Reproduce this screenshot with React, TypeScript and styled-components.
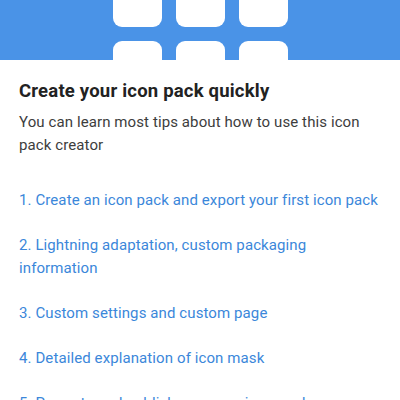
import styled, { createGlobalStyle } from 'styled-components';

const GlobalStyle = createGlobalStyle`
  html, body {
    margin: 0;
    padding: 0;
    background: #ffffff;
  }
  body {
    font-family: Roboto, "Liberation Sans", sans-serif;
  }
`;

const tips = [
  '1. Create an icon pack and export your first icon pack',
  '2. Lightning adaptation, custom packaging information',
  '3. Custom settings and custom page',
  '4. Detailed explanation of icon mask',
  '5. Promote and publish your own icon pack',
];

const App = () => (
  <Page>
    <GlobalStyle />
    <Banner>
      <TileGrid>
        {Array.from({ length: 6 }).map((_, i) => (
          <Tile key={i} />
        ))}
      </TileGrid>
    </Banner>
    <Content>
      <Title>Create your icon pack quickly</Title>
      <Intro>You can learn most tips about how to use this icon pack creator</Intro>
      <TipList>
        {tips.map((tip) => (
          <TipLink key={tip}>{tip}</TipLink>
        ))}
      </TipList>
    </Content>
  </Page>
);

export default App;

const Page = styled.div`
  width: 400px;
  height: 400px;
  overflow: hidden;
  background: #ffffff;
`;

const Banner = styled.div`
  height: 60px;
  background: #4a93e7;
  overflow: hidden;
  display: flex;
  justify-content: center;
`;

const TileGrid = styled.div`
  display: grid;
  grid-template-columns: repeat(3, 49px);
  grid-auto-rows: 49px;
  gap: 14px;
  margin-top: -22px;
  padding-left: 1px;
`;

const Tile = styled.div`
  background: #ffffff;
  border-radius: 9px;
`;

const Content = styled.div`
  padding: 19px 20px 0 19px;
`;

const Title = styled.h1`
  margin: 0;
  font-size: 18.5px;
  line-height: 24px;
  font-weight: 700;
  letter-spacing: 0.2px;
  color: #222222;
`;

const Intro = styled.p`
  margin: 8px 0 0;
  font-size: 15px;
  line-height: 23px;
  letter-spacing: 0.1px;
  color: #3d3d3d;
`;

const TipList = styled.div`
  display: flex;
  flex-direction: column;
  gap: 22px;
  margin-top: 32px;
`;

const TipLink = styled.a`
  display: block;
  font-size: 15px;
  line-height: 23px;
  letter-spacing: 0.1px;
  color: #3b87da;
  text-decoration: none;
  cursor: pointer;
`;
